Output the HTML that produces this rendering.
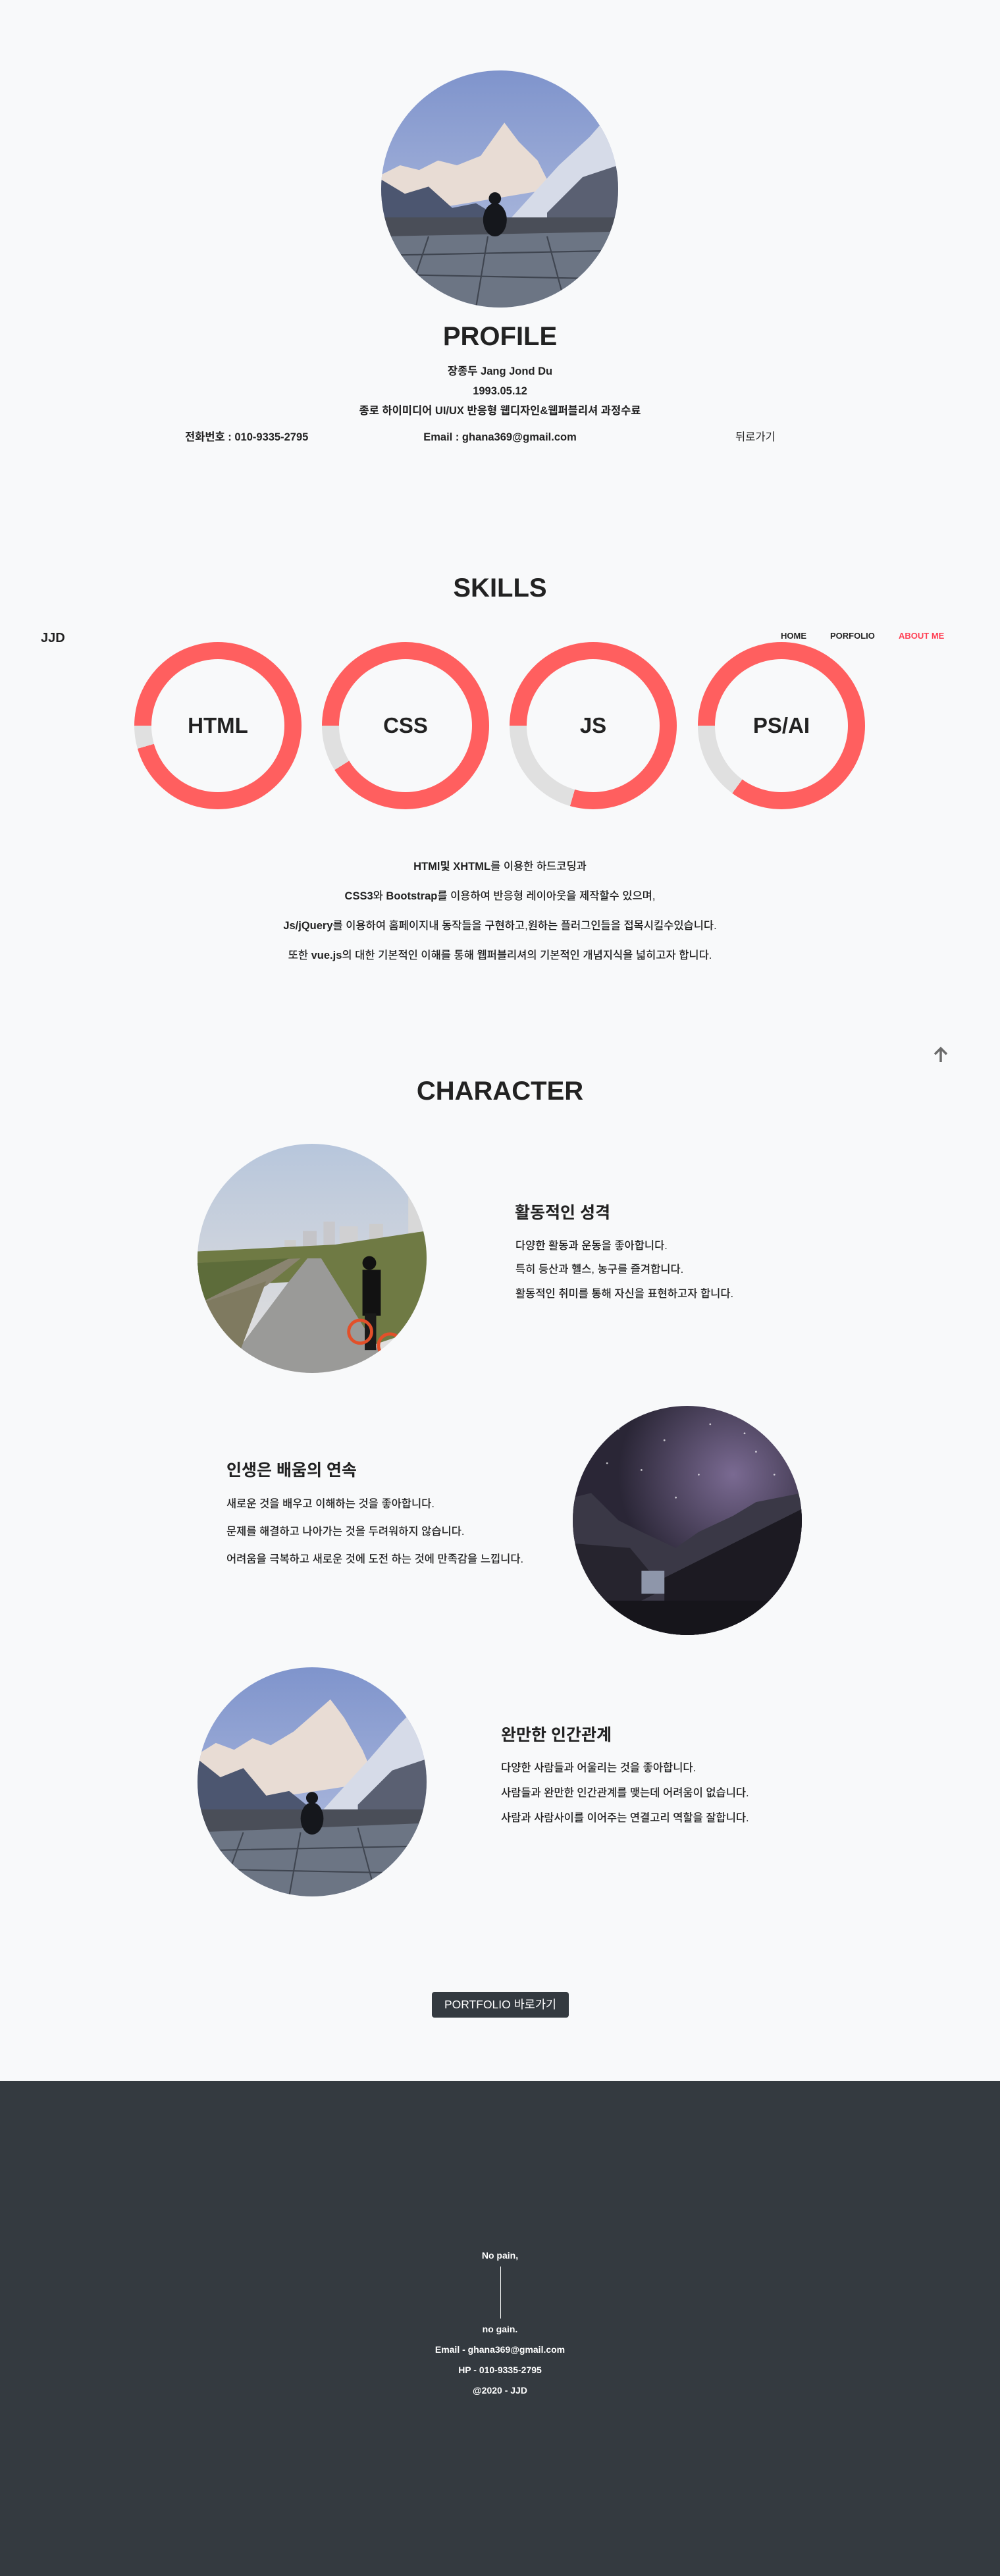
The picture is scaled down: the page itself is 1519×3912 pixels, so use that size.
<!DOCTYPE html>
<html><head><meta charset="utf-8">
<style>
*{margin:0;padding:0;box-sizing:border-box}
body{width:1519px;height:3912px;background:#f8f9fa;position:relative;overflow:hidden;font-family:"Liberation Sans","Noto Sans CJK KR",sans-serif;color:#222}
.a{position:absolute}
.c{position:absolute;left:0;width:1519px;text-align:center}
h2{font-size:40px;font-weight:bold;line-height:48px;color:#222}
.t{font-size:16.5px;font-weight:bold;line-height:22px}
.ring{position:absolute;width:254px;height:254px;border-radius:50%}
.ring::after{content:"";position:absolute;left:26px;top:26px;width:202px;height:202px;border-radius:50%;background:#f8f9fa}
.ring span{position:absolute;left:0;top:0;width:254px;line-height:254px;text-align:center;font-size:33px;font-weight:bold;z-index:2;color:#222}
.circ{position:absolute;border-radius:50%;overflow:hidden}
.h3{font-size:25px;font-weight:bold;line-height:32px}
.p{font-size:16.5px;line-height:22px;font-weight:500}
.f{font-size:14px;font-weight:bold;color:#fff;line-height:18px}
</style></head><body>

<div class="circ" style="left:579px;top:107px;width:360px;height:360px">
<svg width="360" height="360" viewBox="0 0 100 100" preserveAspectRatio="none">
<defs><linearGradient id="sk" x1="0" y1="0" x2="0" y2="1"><stop offset="0" stop-color="#7f94cc"/><stop offset="1" stop-color="#bac4e2"/></linearGradient></defs>
<rect width="100" height="100" fill="url(#sk)"/>
<polygon points="0,44 8,40 16,42 24,38 32,40 42,36 52,22 58,30 66,38 72,50 0,62" fill="#e8dcd4"/>
<polygon points="0,46 10,52 20,49 30,58 40,56 50,62 0,72" fill="#4c5670"/>
<polygon points="55,62 75,40 88,28 95,20 100,18 100,75 60,72" fill="#d6dbe8"/>
<polygon points="70,60 85,45 100,40 100,80 70,78" fill="#5a6072"/>
<rect x="0" y="62" width="100" height="10" fill="#4a4e58"/>
<polygon points="0,70 100,68 100,100 0,100" fill="#6c7584"/>
<path d="M0,78 L100,76 M0,86 L100,88 M20,70 L10,100 M45,70 L40,100 M70,70 L78,100" stroke="#3f4550" stroke-width="0.6"/>
<ellipse cx="48" cy="63" rx="5" ry="7" fill="#15171c"/>
<circle cx="48" cy="54" r="2.6" fill="#15171c"/>
</svg></div>

<div class="c" style="top:487px"><h2>PROFILE</h2></div>
<div class="c t" style="top:553px">장종두 Jang Jond Du</div>
<div class="c t" style="top:583px">1993.05.12</div>
<div class="c t" style="top:613px">종로 하이미디어 UI/UX 반응형 웹디자인&amp;웹퍼블리셔 과정수료</div>
<div class="a t" style="left:281px;top:653px">전화번호 : 010-9335-2795</div>
<div class="c t" style="top:653px">Email : ghana369@gmail.com</div>
<div class="a t" style="left:1117px;top:653px;font-weight:normal">뒤로가기</div>

<div class="c" style="top:869px"><h2>SKILLS</h2></div>
<div class="a" style="left:62px;top:958px;font-size:20px;font-weight:bold">JJD</div>
<div class="a" style="left:1186px;top:958px;font-size:13px;font-weight:bold">HOME</div>
<div class="a" style="left:1261px;top:958px;font-size:13px;font-weight:bold">PORFOLIO</div>
<div class="a" style="left:1365px;top:958px;font-size:13px;font-weight:bold;color:#ff3f53">ABOUT ME</div>

<div class="ring" style="left:204px;top:975px;background:conic-gradient(from 270deg,#ff5f5f 0 344deg,#e0e0e0 344deg 360deg)"><span>HTML</span></div>
<div class="ring" style="left:489px;top:975px;background:conic-gradient(from 270deg,#ff5f5f 0 328deg,#e0e0e0 328deg 360deg)"><span>CSS</span></div>
<div class="ring" style="left:774px;top:975px;background:conic-gradient(from 270deg,#ff5f5f 0 286deg,#e0e0e0 286deg 360deg)"><span>JS</span></div>
<div class="ring" style="left:1060px;top:975px;background:conic-gradient(from 270deg,#ff5f5f 0 306deg,#e0e0e0 306deg 360deg)"><span>PS/AI</span></div>

<div class="c t" style="top:1305px">HTMl및 XHTML<span style="font-weight:500">를 이용한 하드코딩과</span></div>
<div class="c t" style="top:1350px">CSS3<span style="font-weight:500">와</span> Bootstrap<span style="font-weight:500">를 이용하여 반응형 레이아웃을 제작할수 있으며,</span></div>
<div class="c t" style="top:1395px">Js/jQuery<span style="font-weight:500">를 이용하여 홈페이지내 동작들을 구현하고,원하는 플러그인들을 접목시킬수있습니다.</span></div>
<div class="c t" style="top:1440px"><span style="font-weight:500">또한 </span>vue.js<span style="font-weight:500">의 대한 기본적인 이해를 통해 웹퍼블리셔의 기본적인 개념지식을 넓히고자 합니다.</span></div>

<svg class="a" style="left:1415px;top:1588px" width="28" height="28" viewBox="0 0 28 28"><path d="M14 25 V5 M5 13 L14 4 L23 13" stroke="#6b6b6b" stroke-width="3.5" fill="none"/></svg>

<div class="c" style="top:1633px"><h2>CHARACTER</h2></div>

<div class="circ" style="left:300px;top:1737px;width:348px;height:348px">
<svg width="348" height="348" viewBox="0 0 100 100" preserveAspectRatio="none">
<defs><linearGradient id="sk2" x1="0" y1="0" x2="0" y2="1"><stop offset="0" stop-color="#b7c6dc"/><stop offset="1" stop-color="#e6e2de"/></linearGradient></defs>
<rect width="100" height="100" fill="url(#sk2)"/>
<rect x="92" y="18" width="8" height="22" fill="#d8d8d8"/>
<rect x="55" y="34" width="5" height="13" fill="#c8c8cc"/><rect x="62" y="36" width="8" height="11" fill="#d0d0d2"/>
<rect x="46" y="38" width="6" height="10" fill="#c4c4c8"/><rect x="75" y="35" width="6" height="10" fill="#ccc"/>
<rect x="38" y="42" width="5" height="6" fill="#ccc"/>
<polygon points="0,47 60,44 100,38 100,80 70,90 50,60 0,62" fill="#6f7a44"/>
<polygon points="0,52 45,50 30,62 0,74" fill="#8a8470"/>
<polygon points="0,52 40,50 0,70" fill="#5d6c3a"/>
<polygon points="48,50 54,50 85,100 10,100 40,60" fill="#9a9a98"/>
<polygon points="0,70 30,60 15,100 0,100" fill="#7f7a60"/>
<rect x="72" y="55" width="8" height="20" fill="#121212"/>
<rect x="73" y="74" width="5" height="16" fill="#1a1a1a"/>
<circle cx="75" cy="52" r="3" fill="#111"/>
<circle cx="71" cy="82" r="5" fill="none" stroke="#e2502a" stroke-width="1.4"/>
<circle cx="84" cy="88" r="5" fill="none" stroke="#e2502a" stroke-width="1.4"/>
</svg></div>
<div class="a h3" style="left:782px;top:1826px">활동적인 성격</div>
<div class="a p" style="left:783px;top:1881px">다양한 활동과 운동을 좋아합니다.</div>
<div class="a p" style="left:783px;top:1917px">특히 등산과 헬스, 농구를 즐겨합니다.</div>
<div class="a p" style="left:783px;top:1954px">활동적인 취미를 통해 자신을 표현하고자 합니다.</div>

<div class="circ" style="left:870px;top:2135px;width:348px;height:348px">
<svg width="348" height="348" viewBox="0 0 100 100" preserveAspectRatio="none">
<defs><radialGradient id="mw" cx="0.7" cy="0.3" r="0.5"><stop offset="0" stop-color="#7a6a92"/><stop offset="1" stop-color="#2a2636"/></radialGradient></defs>
<rect width="100" height="100" fill="url(#mw)"/>
<polygon points="0,40 8,38 20,50 30,55 45,62 55,55 70,48 80,42 100,38 100,100 0,100" fill="#3a3846"/>
<polygon points="40,75 100,45 100,100 40,100" fill="#1c1a22"/>
<polygon points="0,60 25,62 40,80 0,100" fill="#26242e"/>
<rect x="0" y="85" width="100" height="15" fill="#16151b"/>
<rect x="30" y="72" width="10" height="10" fill="#8e96aa"/>
<g fill="#fff" opacity="0.7"><circle cx="20" cy="10" r=".4"/><circle cx="40" cy="15" r=".4"/><circle cx="60" cy="8" r=".4"/><circle cx="80" cy="20" r=".4"/><circle cx="30" cy="28" r=".4"/><circle cx="55" cy="30" r=".4"/><circle cx="15" cy="25" r=".4"/><circle cx="75" cy="12" r=".4"/><circle cx="88" cy="30" r=".4"/><circle cx="45" cy="40" r=".4"/></g>
</svg></div>
<div class="a h3" style="left:344px;top:2217px">인생은 배움의 연속</div>
<div class="a p" style="left:344px;top:2273px">새로운 것을 배우고 이해하는 것을 좋아합니다.</div>
<div class="a p" style="left:344px;top:2315px">문제를 해결하고 나아가는 것을 두려워하지 않습니다.</div>
<div class="a p" style="left:344px;top:2357px">어려움을 극복하고 새로운 것에 도전 하는 것에 만족감을 느낍니다.</div>

<div class="circ" style="left:300px;top:2532px;width:348px;height:348px">
<svg width="348" height="348" viewBox="0 0 100 100" preserveAspectRatio="none">
<defs><linearGradient id="sk3" x1="0" y1="0" x2="0" y2="1"><stop offset="0" stop-color="#7f94cc"/><stop offset="1" stop-color="#bac4e2"/></linearGradient></defs>
<rect width="100" height="100" fill="url(#sk3)"/>
<polygon points="0,38 8,33 16,36 24,31 32,34 42,28 58,14 64,22 72,36 78,50 0,62" fill="#e8dcd4"/>
<polygon points="0,40 10,48 20,44 30,56 40,54 50,62 0,72" fill="#4c5670"/>
<polygon points="55,62 75,40 88,25 95,18 100,16 100,75 60,72" fill="#d6dbe8"/>
<polygon points="70,60 85,45 100,40 100,80 70,78" fill="#5a6072"/>
<rect x="0" y="62" width="100" height="10" fill="#4a4e58"/>
<polygon points="0,72 100,68 100,100 0,100" fill="#6c7584"/>
<path d="M0,80 L100,78 M0,88 L100,90 M20,72 L10,100 M45,72 L40,100 M70,70 L78,100" stroke="#3f4550" stroke-width="0.6"/>
<ellipse cx="50" cy="66" rx="5" ry="7" fill="#15171c"/>
<circle cx="50" cy="57" r="2.6" fill="#15171c"/>
</svg></div>
<div class="a h3" style="left:761px;top:2619px">완만한 인간관계</div>
<div class="a p" style="left:761px;top:2674px">다양한 사람들과 어울리는 것을 좋아합니다.</div>
<div class="a p" style="left:761px;top:2712px">사람들과 완만한 인간관계를 맺는데 어려움이 없습니다.</div>
<div class="a p" style="left:761px;top:2750px">사람과 사람사이를 이어주는 연결고리 역할을 잘합니다.</div>

<div class="a" style="left:656px;top:3025px;width:208px;height:39px;background:#343a40;border-radius:4px;color:#fff;font-size:17.5px;line-height:39px;text-align:center">PORTFOLIO 바로가기</div>

<div class="a" style="left:0;top:3160px;width:1519px;height:752px;background:#343a40"></div>
<div class="c f" style="top:3416px">No pain,</div>
<div class="a" style="left:760px;top:3442px;width:1px;height:79px;background:#fff"></div>
<div class="c f" style="top:3528px">no gain.</div>
<div class="c f" style="top:3559px">Email - ghana369@gmail.com</div>
<div class="c f" style="top:3590px">HP - 010-9335-2795</div>
<div class="c f" style="top:3621px">@2020 - JJD</div>
</body></html>
